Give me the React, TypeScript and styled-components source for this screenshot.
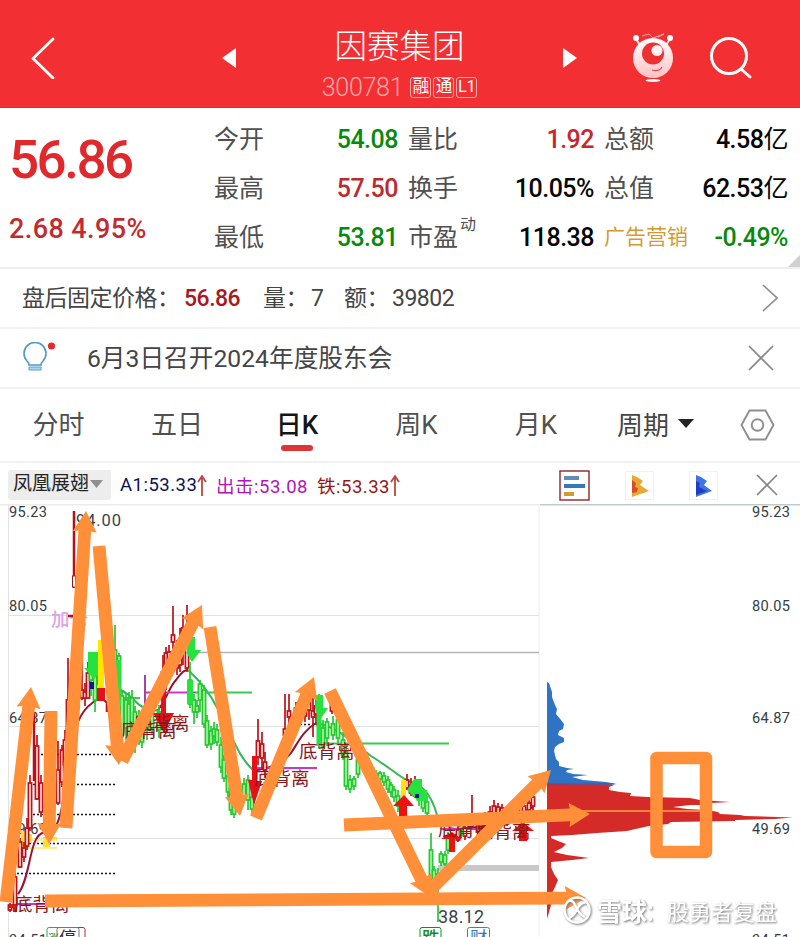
import React from 'react';
import styled, { createGlobalStyle } from 'styled-components';

type Tone = 'up' | 'down';
// x, high, low, body top, body bottom
type Candle = [number, number, number, number, number];
type Arrow = [number, number, number, number];

const quotes = [
	{ label: '今开', value: '54.08', color: '#078a0c' },
	{ label: '量比', value: '1.92', color: '#c9252b' },
	{ label: '总额', value: '4.58', unit: '亿', color: '#050505' },
	{ label: '最高', value: '57.50', color: '#bd2a2e' },
	{ label: '换手', value: '10.05%', color: '#050505' },
	{ label: '总值', value: '62.53', unit: '亿', color: '#050505' },
	{ label: '最低', value: '53.81', color: '#078a0c' },
	{ label: '市盈', sup: '动', value: '118.38', color: '#050505' },
	{ label: '广告营销', value: '-0.49%', color: '#078a0c', accent: true },
];

const tabs = [
	{ name: '分时', width: 117 },
	{ name: '五日', width: 120 },
	{ name: '日K', width: 120, active: true },
	{ name: '周K', width: 119 },
	{ name: '月K', width: 120 },
];

const axis: [string, number][] = [
	['95.23', 517],
	['80.05', 611],
	['64.87', 723],
	['49.69', 834],
	['34.51', 945],
];

const ups: Candle[] = [
	[10, 903, 912, 905, 910], [15, 869, 912, 877, 905], [20, 838, 868, 842, 867], [24, 842, 862, 848, 857],
	[27, 818, 850, 828, 846], [30, 775, 831, 783, 828], [37, 735, 800, 746, 799], [41, 775, 817, 783, 812],
	[58, 741, 805, 770, 803], [62, 745, 787, 750, 782], [65, 730, 775, 740, 765], [68, 658, 735, 700, 730],
	[82, 640, 700, 690, 698], [85, 683, 706, 692, 698], [88, 662, 699, 673, 698],
	[163, 655, 702, 672, 700], [166, 647, 690, 653, 680], [169, 645, 680, 652, 675], [173, 606, 668, 635, 642],
	[177, 640, 675, 646, 668], [180, 628, 672, 656, 665], [183, 615, 665, 628, 640], [187, 605, 672, 640, 668],
	[258, 719, 765, 741, 757], [262, 732, 770, 744, 758], [265, 752, 778, 762, 770],
	[285, 694, 735, 729, 735], [289, 694, 725, 711, 717], [296, 702, 720, 708, 716], [305, 698, 722, 706, 716],
	[309, 686, 720, 690, 710], [313, 680, 737, 711, 717], [316, 700, 725, 706, 714],
	[332, 695, 714, 703, 711], [338, 703, 716, 706, 712],
	[407, 774, 790, 780, 788], [411, 778, 796, 785, 793], [415, 776, 798, 784, 796],
	[458, 826, 842, 830, 840], [465, 824, 840, 828, 836], [472, 795, 820, 815, 820], [478, 820, 835, 824, 832],
	[485, 812, 830, 818, 826], [490, 806, 828, 812, 818], [494, 800, 822, 806, 818], [498, 803, 816, 807, 813],
	[502, 804, 824, 808, 818], [507, 806, 826, 812, 822], [512, 804, 822, 808, 815], [518, 801, 818, 805, 812],
	[524, 802, 818, 806, 812], [529, 799, 815, 803, 810], [533, 794, 812, 797, 806],
];

const downs: Candle[] = [
	[91, 655, 696, 662, 680], [95, 660, 712, 675, 700], [99, 664, 690, 670, 684],
	[115, 625, 700, 650, 690], [119, 653, 726, 656, 715], [122, 690, 742, 696, 735], [126, 694, 740, 700, 728],
	[129, 692, 748, 704, 740], [132, 690, 735, 698, 725], [135, 706, 753, 712, 738], [139, 710, 745, 716, 735],
	[142, 712, 748, 718, 742], [147, 712, 740, 720, 730], [152, 708, 734, 712, 728], [159, 705, 738, 712, 730],
	[190, 662, 708, 680, 704], [194, 694, 724, 700, 712], [197, 700, 718, 706, 712], [200, 680, 712, 684, 700],
	[204, 685, 728, 690, 724], [207, 715, 748, 721, 745], [211, 726, 750, 731, 744], [214, 722, 744, 729, 736],
	[217, 724, 746, 730, 742], [221, 737, 773, 745, 767], [224, 755, 782, 760, 778], [228, 772, 797, 776, 792],
	[231, 785, 815, 788, 810], [234, 795, 818, 800, 814], [244, 778, 802, 784, 798], [248, 775, 810, 780, 800],
	[252, 792, 816, 797, 809], [319, 694, 748, 702, 745], [323, 720, 750, 728, 746], [327, 718, 746, 722, 738],
	[333, 716, 740, 724, 735], [338, 712, 745, 720, 738], [343, 732, 760, 740, 755], [346, 745, 790, 752, 786],
	[350, 775, 793, 780, 789], [354, 776, 790, 779, 786], [358, 755, 778, 760, 774], [365, 756, 774, 760, 768],
	[372, 764, 780, 768, 777], [376, 770, 784, 774, 780], [380, 771, 782, 773, 779], [384, 772, 786, 776, 782],
	[388, 776, 793, 780, 789], [391, 782, 797, 785, 792], [394, 786, 802, 790, 797], [398, 790, 812, 796, 806],
	[419, 784, 806, 788, 800], [423, 790, 812, 795, 808], [427, 796, 818, 802, 813], [431, 833, 884, 850, 880],
	[434, 866, 890, 870, 886], [438, 868, 922, 874, 888], [441, 851, 866, 854, 862], [445, 851, 866, 855, 864],
	[448, 832, 854, 838, 850], [461, 828, 838, 831, 835],
];

const arrows: Arrow[] = [
	[6, 902, 31, 687],
	[51, 711, 49, 844],
	[66, 828, 86, 511],
	[99, 546, 119, 765],
	[122, 761, 202, 605],
	[210, 627, 240, 816],
	[256, 818, 314, 677],
	[330, 691, 430, 897],
	[427, 893, 551, 770],
	[344, 825, 590, 814],
	[45, 901, 586, 898],
];

const blueProfile =
	'547,682 549,683 552,692 552,697 555,705 557,709 556,714 561,720 564,724 563,729 559,731 558,735 564,738 564,742 559,744 555,747 554,751 556,759 559,762 559,766 567,768 574,769 567,770 566,772 573,774 588,775 572,777 583,780 606,782 617,784 609,785 547,785';
const redProfile =
	'547,784 614,785 609,787 609,790 620,792 631,793 630,796 648,797 690,798 700,800 730,802 711,803 710,805 690,805 673,807 687,809 707,810 718,812 720,814 740,815 745,816 793,817.5 774,819 735,820 735,821 671,822 668,824 649,826 640,828 627,831 597,833 572,835 551,836 551,838 558,841 566,844 562,848 554,852 567,855 589,858 572,860 551,862 551,867 554,874 558,880 555,887 552,893 551,905 547,919';

const arrowPoints = ([x1, y1, x2, y2]: Arrow) => {
	const len = Math.hypot(x2 - x1, y2 - y1);
	const ux = (x2 - x1) / len;
	const uy = (y2 - y1) / len;
	const at = (along: number, side: number) =>
		`${(x1 + ux * along - uy * side).toFixed(1)},${(y1 + uy * along + ux * side).toFixed(1)}`;
	const neck = len - 20;
	return [at(0, 6.4), at(neck, 6.4), at(neck - 1, 12), at(len, 0), at(neck - 1, -12), at(neck, -6.4), at(0, -6.4)].join(' ');
};

const Candles: React.FC<{ data: Candle[]; tone: Tone }> = ({ data, tone }) => {
	const stroke = tone === 'up' ? '#bd1018' : '#25c832';
	const fill = tone === 'up' ? '#fff3f0' : '#b9f9ae';
	return (
		<g stroke={stroke} fill={fill} strokeWidth={1.7}>
			{data.map(([x, high, low, top, bottom]) => (
				<g key={x}>
					<path d={`M${x} ${high}V${low}`} />
					<rect x={x - 1.6} y={top} width={3.2} height={bottom - top} />
				</g>
			))}
		</g>
	);
};

const PriceChart: React.FC = () => (
	<ChartSvg viewBox="0 504 800 433">
		<g stroke="#dfe1e3" strokeWidth="1">
			<path d="M8.500 504V937" />
			<path d="M539 504V937" stroke="#eceeef" />
			<path d="M8 615.500H539M8 726.500H539M8 838.500H539" />
			<path d="M0 504.500H540" stroke="#ececec" strokeWidth="2" />
			<path d="M540 504.500H800" stroke="#c3c8cb" strokeWidth="2" />
			<path d="M190 652.500H539" stroke="#b1b5b4" strokeWidth="1.500" />
		</g>
		<rect x="438" y="865" width="101" height="6" fill="#c8c8c8" />

		<g fontSize="14.6" fill="#333c44">
			{axis.map(([label, y]) => (
				<g key={label}>
					<text x="9" y={y} textLength="38">{label}</text>
					<text x="752" y={y} textLength="38">{label}</text>
				</g>
			))}
		</g>
		<text x="76" y="526" fontSize="16.500" fill="#39434a" textLength="45">94.00</text>
		<text x="51" y="626" fontSize="18.500" fill="#dfa0e6" fontWeight="500">加仓</text>

		<g stroke="#171422" strokeWidth="1.600" strokeDasharray="2 2">
			<path d="M37 754.500H117M29 784.500H117M29 814.500H117M25 843.500H117M17 873.500H117M296 724.500H317" />
		</g>
		<path d="M21 831H28V848H21ZM28 834H32V843H28ZM43 837H57V840H50V847H43Z" fill="#ffdc32" />
		<path d="M28 848H57M32 840H57" stroke="#ffe66b" strokeWidth="1.500" />

		<g fill="none" strokeWidth="2">
			<path d="M18 894C27 883 29 858 34 844Q39 830 48 833C65 830 64 775 74 735Q79 713 91 704Q101 695 107 703" stroke="#9a123b" />
			<path d="M107 687Q121 686 135 701Q147 713 158 710" stroke="#28b757" />
			<path d="M158 710C167 699 169 687 176 680C182 672 184 670 188 670" stroke="#981026" />
			<path d="M188 670Q206 686 218 709C232 734 237 756 254 771" stroke="#2db957" />
			<path d="M254 771C270 767 281 766 291 753C299 741 303 731 316 723" stroke="#8b1434" />
			<path d="M316 723C341 728 354 744 371 756C389 767 397 775 408 781Q429 785 437 815Q444 826 454 829" stroke="#36b854" />
			<path d="M454 829Q495 829 533 807" stroke="#911332" />
		</g>
		<g strokeWidth="2">
			<path d="M16 904H45M146 692.500H196M256 768H317M357 827H385M441 829H488" stroke="#cf35c5" />
			<path d="M145 675V710" stroke="#a940a2" />
			<path d="M196 692.500H252M120 698H140M320 743.500H449" stroke="#38c94d" />
		</g>

		<Candles data={ups} tone="up" />
		<Candles data={downs} tone="down" />
		<path d="M74 511V588M68 616H78M34 712V781M107 703V712" stroke="#b80f19" strokeWidth="2.500" />
		<rect x="72.500" y="576" width="3" height="11" fill="#fff" stroke="#a0151b" />

		<g fill="#26e23f">
			<path d="M88 652H100V668H104L94 679L84 668H88ZM187 637H195V650H201L192 662L186 652H187ZM316 695H323V708H328L320 720L315 708ZM414 779H422V790H427V801H418L407 790Z" />
			<path d="M187 680H193V704H187ZM317 707H321V746H317ZM116 660H121V706H116Z" />
		</g>
		<path d="M98 640H104V690H98ZM401 780H406V799H401Z" fill="#ffe500" />
		<path d="M97 688H105V701H97ZM161 690H166V713H174L164 733L153 713H161ZM252 756H257V781H262L254 805L248 780H252Z" fill="#e71018" />
		<path d="M404 795L414 806H407V817H399V806H393ZM452 832L462 839H455V852H449V839H441ZM523 822L534 831H527V841H519V831H512Z" fill="#ee1111" />
		<path d="M90 682H94V689H90ZM415 794H419V798H415Z" fill="#15158d" />
		<path d="M9 904H17V912H13V908H9Z" fill="#d71919" />

		<g fontSize="18.500" fill="#8b171b">
			<text x="14" y="911">底背离</text>
			<text x="121" y="737">底背离</text>
			<text x="134" y="730">底背离</text>
			<text x="254" y="785">底背离</text>
			<text x="299" y="758">底背离</text>
			<text x="438" y="836">底背离</text>
			<text x="475" y="838">底背离</text>
		</g>

		<polygon points={blueProfile} fill="#2f73c5" />
		<polygon points={redProfile} fill="#d42a28" />
		<path d="M547 784H614" stroke="#803f77" />
		<path d="M580 811H712" stroke="#ffa43b" strokeWidth="1.300" />

		<g fill="#ff8f38">
			{arrows.map((arrow) => (
				<polygon key={arrow.join()} points={arrowPoints(arrow)} />
			))}
		</g>
		<rect x="656.500" y="758" width="49.500" height="94" fill="none" stroke="#ff8f38" strokeWidth="12.500" strokeLinejoin="round" />

		<text x="438" y="923" fontSize="18" fill="#39434a" textLength="46">38.12</text>
		<g strokeWidth="1" fill="#fff">
			<rect x="47" y="927.500" width="20" height="20" rx="2" stroke="#36a548" />
			<rect x="68" y="927.500" width="17" height="20" rx="2" stroke="#b32a31" />
			<rect x="57" y="927.500" width="22" height="20" rx="2" stroke="#777" />
			<rect x="420" y="927.500" width="21" height="20" rx="2" stroke="#128b24" />
			<rect x="467.500" y="927.500" width="22" height="20" rx="2" stroke="#3885be" />
		</g>
		<g fontSize="17.500">
			<text x="48" y="943" fill="#128b24" fontSize="11">涨</text>
			<text x="59" y="944" fill="#303030">停</text>
			<text x="422" y="944" fill="#128b24" fontWeight="500">跌</text>
			<text x="470" y="944" fill="#3079b5">财</text>
		</g>

		<Watermark>
			<circle cx="577" cy="910" r="12.500" fill="none" stroke="#fff" strokeWidth="2.500" />
			<path d="M569 901Q573 900 575 905L577 909Q580 915 585 917M586 902Q580 903 577 909Q574 916 569 918" fill="none" stroke="#fff" strokeWidth="2.500" />
			<text x="597" y="921" fontSize="25" fontWeight="700">雪球</text>
			<text x="645" y="920" fontSize="22">：</text>
			<text x="667" y="920" fontSize="22">股勇者复盘</text>
		</Watermark>
	</ChartSvg>
);

const App: React.FC = () => {
	return (
		<Page>
			<GlobalStyle />
			<Header>
				<svg width="24" height="42" viewBox="0 0 24 42" fill="none" stroke="#fff" strokeWidth="2.800" strokeLinecap="round" strokeLinejoin="round">
					<path d="M22 2L2 21.500L22 41" />
				</svg>
				<Switcher>
					<svg width="14" height="20" viewBox="0 0 14 20"><path d="M0 10L14 0V20Z" fill="#fff" /></svg>
					<Heading>
						<StockName>因赛集团</StockName>
						<CodeLine>
							<Code>300781</Code>
							<Tag>融</Tag>
							<Tag>通</Tag>
							<Tag>L1</Tag>
						</CodeLine>
					</Heading>
					<svg width="14" height="20" viewBox="0 0 14 20"><path d="M14 10L0 0V20Z" fill="#fff" /></svg>
				</Switcher>
				<HeaderIcons>
					<svg width="42" height="50" viewBox="0 0 42 50" fill="none">
						<defs>
							<linearGradient id="ball" x2="0" y2="1">
								<stop stopColor="#fff" />
								<stop offset="1" stopColor="#ffc1c3" />
							</linearGradient>
						</defs>
						<path d="M4 6L10 15M38 6L32 15" stroke="#ffe8e8" strokeWidth="2" />
						<circle cx="4" cy="5" r="3" fill="#fff" />
						<circle cx="38" cy="5" r="3" fill="#fff" />
						<path d="M10 3L17 1L21 5L32 1L26 4" stroke="#ffb1b1" />
						<circle cx="21" cy="25" r="20" fill="url(#ball)" />
						<circle cx="21" cy="20.500" r="11" fill="#ef3033" />
						<circle cx="25" cy="17.500" r="5.500" fill="#fff2f2" />
						<path d="M20 37Q27 39 30 34" stroke="#e34a4c" strokeWidth="1.300" />
						<ellipse cx="21" cy="47.500" rx="7.500" ry="1.500" fill="#fff" />
					</svg>
					<svg width="42" height="42" viewBox="0 0 42 42" fill="none" stroke="#fff" strokeWidth="3" strokeLinecap="round">
						<circle cx="19" cy="19" r="17.500" />
						<path d="M31 32L40 40" />
					</svg>
				</HeaderIcons>
			</Header>

			<Summary>
				<PriceBlock>
					<Price>56.86</Price>
					<Change>2.68 4.95%</Change>
				</PriceBlock>
				<QuoteGrid>
					{quotes.map((quote) => (
						<Quote key={quote.label}>
							<QuoteLabel $accent={quote.accent}>
								{quote.label}
								{quote.sup && <Sup>{quote.sup}</Sup>}
							</QuoteLabel>
							<QuoteValue $color={quote.color}>
								{quote.value}
								{quote.unit && <Unit>{quote.unit}</Unit>}
							</QuoteValue>
						</Quote>
					))}
				</QuoteGrid>
				<Corner />
			</Summary>

			<FixedPrice>
				<Field $width={162} $cjk>盘后固定价格：</Field>
				<Field $width={79} $red>56.86</Field>
				<Field $width={48} $cjk>量：</Field>
				<Field $width={33}>7</Field>
				<Field $width={48} $cjk>额：</Field>
				<Field>39802</Field>
				<Push>
					<svg width="16" height="28" viewBox="0 0 16 28" fill="none" stroke="#8c8c8c" strokeWidth="1.700"><path d="M1 1L15 14L1 27" /></svg>
				</Push>
			</FixedPrice>

			<Notice>
				<svg width="34" height="32" viewBox="0 0 34 32" fill="none">
					<path d="M6 23Q6 21 4 19A11 11 0 1 1 20 19Q18 21 18 23Z" stroke="#5397c8" strokeWidth="1.600" />
					<path d="M6 25H18V28H6Z" fill="#a9d7f4" stroke="#5ca1d0" />
					<circle cx="28.500" cy="4" r="3.600" fill="#df2e30" />
				</svg>
				<NoticeText>6月3日召开2024年度股东会</NoticeText>
				<Push>
					<svg width="26" height="26" viewBox="0 0 26 26" stroke="#858585" strokeWidth="1.700"><path d="M1 1L25 25M25 1L1 25" /></svg>
				</Push>
			</Notice>

			<Tabs>
				{tabs.map((tab) => (
					<Tab key={tab.name} $width={tab.width} $active={tab.active}>{tab.name}</Tab>
				))}
				<Period>
					周期
					<svg width="16" height="9" viewBox="0 0 16 9"><path d="M0 0H16L8 9Z" fill="#242424" /></svg>
				</Period>
				<svg width="35" height="32" viewBox="0 0 35 32" fill="none" stroke="#8e8e8e" strokeWidth="1.900">
					<path d="M9.500 1.500H25.500L33.500 16L25.500 30.500H9.500L1.500 16Z" />
					<circle cx="17.500" cy="16" r="5.800" />
				</svg>
			</Tabs>

			<IndicatorBar>
				<IndicatorName>
					凤凰展翅
					<svg width="13" height="8" viewBox="0 0 13 8"><path d="M0 0H13L6.500 8Z" fill="#909090" /></svg>
				</IndicatorName>
				<Indicator $color="#10105a" $width={96}>A1:53.33<RiseMark /></Indicator>
				<Indicator $color="#b115b7" $width={101}>出击:53.08</Indicator>
				<Indicator $color="#951719" $width={86}>铁:53.33<RiseMark /></Indicator>
				<Tools>
					<svg width="31" height="31" viewBox="0 0 31 31">
						<rect x="1" y="1" width="29" height="29" fill="#fff" stroke="#963235" strokeWidth="1.500" />
						<path d="M5 6H20V10H5Z" fill="#628bb9" />
						<path d="M5 14H26V18H5Z" fill="#3478bd" />
						<path d="M5 22H15V26H5Z" fill="#cf9c31" />
					</svg>
					<svg width="29" height="29" viewBox="0 0 29 29">
						<rect x=".5" y=".5" width="28" height="28" fill="#fff" stroke="#f1f1f1" />
						<path d="M7 4L12 6L18 10L15 14L24 20L7 26Z" fill="#e8a834" />
						<path d="M7 9L11 12L10 16L13 17L12 21L7 22Z" fill="#d94c25" />
					</svg>
					<svg width="29" height="29" viewBox="0 0 29 29">
						<rect x=".5" y=".5" width="28" height="28" fill="#fff" stroke="#f1f1f1" />
						<path d="M7 4L12 6L18 10L15 14L23 20L7 26Z" fill="#3d77df" />
						<path d="M7 10L11 12L10 16L18 20L7 24Z" fill="#233cc3" />
					</svg>
					<CloseIcon width="22" height="22" viewBox="0 0 22 22"><path d="M1 1L21 21M21 1L1 21" /></CloseIcon>
				</Tools>
			</IndicatorBar>

			<PriceChart />
		</Page>
	);
};

const RiseMark: React.FC = () => (
	<svg width="10" height="23" viewBox="0 0 10 23" fill="none" stroke="#bd4543" strokeWidth="1.800">
		<path d="M5 22V2M1 8L5 2L9 8" />
	</svg>
);

export default App;

const GlobalStyle = createGlobalStyle`
	* {
		box-sizing: border-box;
	}
	body {
		background: #fff;
		font-family: Roboto, 'Noto Sans CJK SC', sans-serif;
		margin: 0;
		overflow: hidden;
	}
	svg {
		display: block;
		flex-shrink: 0;
	}
`;

const Page = styled.main`
	color: #454545;
	height: 937px;
	overflow: hidden;
	white-space: nowrap;
	width: 800px;
`;

const Header = styled.header`
	align-items: center;
	background: #f23033;
	border-bottom: 1px solid #c83436;
	color: #fff;
	display: flex;
	height: 108px;
	justify-content: space-between;
	padding: 8px 48px 0 31px;
`;

const Switcher = styled.div`
	align-items: center;
	display: flex;
	justify-content: space-between;
	margin-left: 166px;
	width: 355px;
`;

const Heading = styled.div`
	align-items: center;
	display: flex;
	flex-direction: column;
	padding-top: 17px;
`;

const StockName = styled.h1`
	font-size: 32.5px;
	font-weight: 300;
	line-height: 42px;
	margin: 0;
`;

const CodeLine = styled.div`
	align-items: center;
	display: flex;
	gap: 2px;
	height: 38px;
`;

const Code = styled.span`
	color: #ffaaa8;
	font-size: 25px;
	font-weight: 300;
	letter-spacing: -0.3px;
	margin-right: 5px;
`;

const Tag = styled.span`
	border: 1px solid #ffaaa8;
	border-radius: 3px;
	font-size: 16.5px;
	height: 21px;
	letter-spacing: -0.5px;
	line-height: 18px;
	text-align: center;
	width: 21px;
`;

const HeaderIcons = styled.div`
	align-items: center;
	display: flex;
	gap: 36px;
	margin-left: 54px;
`;

const Summary = styled.section`
	border-bottom: 2px solid #eee;
	display: flex;
	height: 161px;
	position: relative;
`;

const PriceBlock = styled.div`
	flex: 0 0 214px;
	padding: 22px 0 0 9px;
`;

const Price = styled.div`
	color: #df292d;
	font-size: 53px;
	font-weight: 500;
	letter-spacing: -2.5px;
	line-height: 60px;
`;

const Change = styled.div`
	color: #c4292d;
	font-size: 27px;
	font-weight: 500;
	letter-spacing: 0.4px;
	line-height: 36px;
	margin-top: 21px;
`;

const QuoteGrid = styled.div`
	column-gap: 10px;
	display: grid;
	grid-template-columns: 184px 186px 184px;
	grid-template-rows: repeat(3, 49px);
	padding-top: 7px;
`;

const Quote = styled.div`
	align-items: center;
	display: flex;
	justify-content: space-between;
`;

const QuoteLabel = styled.span<{ $accent?: boolean }>`
	color: ${({ $accent }) => ($accent ? '#d39b35' : '#505050')};
	display: flex;
	font-size: ${({ $accent }) => ($accent ? 21 : 25)}px;
	padding-bottom: 5px;
`;

const Sup = styled.sup`
	font-size: 16px;
	line-height: 16px;
	margin-left: 2px;
`;

const QuoteValue = styled.span<{ $color: string }>`
	color: ${({ $color }) => $color};
	font-size: 25px;
	font-weight: 500;
	letter-spacing: -0.5px;
	line-height: 36px;
`;

const Unit = styled.span`
	font-weight: 400;
`;

const Corner = styled.span`
	border-bottom: 12px solid #d0d0d0;
	border-left: 12px solid transparent;
	bottom: 0;
	position: absolute;
	right: 0;
`;

const Row = styled.section`
	align-items: center;
	border-bottom: 2px solid #f1f1f1;
	display: flex;
	height: 60px;
	padding: 0 22px;
`;

const FixedPrice = styled(Row)`
	font-size: 23px;
`;

const Field = styled.span<{ $width?: number; $red?: boolean; $cjk?: boolean }>`
	color: ${({ $red }) => ($red ? '#a91820' : '#454545')};
	flex: 0 0 ${({ $width }) => ($width ? `${$width}px` : 'auto')};
	font-weight: ${({ $red }) => ($red ? 500 : 400)};
	letter-spacing: -0.5px;
	padding-bottom: ${({ $cjk }) => ($cjk ? 5 : 0)}px;
`;

const Push = styled.div`
	margin-left: auto;
`;

const Notice = styled(Row)`
	padding: 0 26px 0 23px;
`;

const NoticeText = styled.span`
	font-size: 24.7px;
	margin-left: 30px;
	padding-bottom: 5px;
`;

const Tabs = styled.nav`
	align-items: center;
	border-bottom: 2px solid #f1f1f1;
	display: flex;
	height: 74px;
`;

const Tab = styled.div<{ $width: number; $active?: boolean }>`
	align-items: center;
	color: ${({ $active }) => ($active ? '#151515' : '#505050')};
	display: flex;
	flex: 0 0 ${({ $width }) => $width}px;
	flex-direction: column;
	font-size: 26px;
	font-weight: ${({ $active }) => ($active ? 500 : 400)};
	padding-bottom: 5px;

	&::after {
		background: ${({ $active }) => ($active ? '#df3336' : 'transparent')};
		border-radius: 4px;
		content: '';
		height: 6px;
		margin: 4px 0 -10px;
		width: 32px;
	}
`;

const Period = styled.div`
	align-items: center;
	display: flex;
	font-size: 26px;
	gap: 9px;
	margin: 0 46px 0 21px;
	padding-bottom: 4px;
`;

const IndicatorBar = styled.section`
	align-items: center;
	display: flex;
	font-size: 18.5px;
	height: 41px;
	padding: 3px 22px 0 8px;
`;

const IndicatorName = styled.div`
	align-items: center;
	background: #ededed;
	border-radius: 3px;
	color: #242424;
	display: flex;
	flex: 0 0 103px;
	font-size: 19px;
	gap: 1px;
	height: 30px;
	line-height: 26px;
	margin-right: 9px;
	padding: 0 0 2px 5px;
`;

const Indicator = styled.div<{ $color: string; $width: number }>`
	align-items: center;
	color: ${({ $color }) => $color};
	display: flex;
	flex: 0 0 ${({ $width }) => $width}px;
	letter-spacing: 0.5px;
`;

const Tools = styled.div`
	align-items: center;
	display: flex;
	gap: 35px;
	margin-left: auto;
`;

const CloseIcon = styled.svg`
	margin-left: 3px;
	stroke: #858585;
	stroke-width: 1.7;
`;

const ChartSvg = styled.svg`
	font-family: Roboto, 'Noto Sans CJK SC', sans-serif;
	height: 433px;
	width: 800px;
`;

const Watermark = styled.g`
	fill: #fff;
	filter: drop-shadow(1px 1px 1px #777);
`;
